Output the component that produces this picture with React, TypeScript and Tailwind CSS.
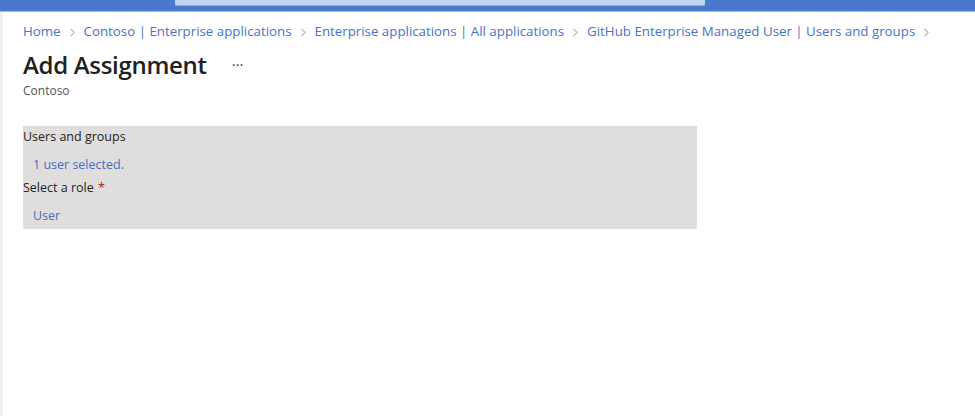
import { ChevronRight } from "lucide-react";

const crumbs = [
  "Home",
  "Contoso | Enterprise applications",
  "Enterprise applications | All applications",
  "GitHub Enterprise Managed User | Users and groups",
];

export default function App() {
  return (
    <div
      className="relative flex flex-col h-[416px] w-[975px] overflow-hidden bg-white"
      style={{ fontFamily: '"Open Sans", "Noto Sans", sans-serif' }}
    >
      {/* top bar */}
      <div className="h-[12px] bg-[#4a78cc] border-b border-[#9db7e6] flex shrink-0">
        <div className="ml-[175px] w-[530px] h-[6px] bg-[#c0d7f1] border-b border-[#8caadf] rounded-b-[2px]" />
      </div>

      <div className="flex flex-1">
        <div className="w-[3px] bg-[#f0f0f0] shrink-0" />

        <div className="flex-1 pl-[20px] pt-[10px]">
          {/* breadcrumb */}
          <nav className="flex items-center h-[20px] text-[13.3px] text-[#4a72c8] whitespace-nowrap">
            {crumbs.map((c) => (
              <div key={c} className="flex items-center">
                <span>{c}</span>
                <ChevronRight size={13} strokeWidth={1.6} className="mx-[5px] text-[#757575]" />
              </div>
            ))}
          </nav>

          {/* title */}
          <div className="flex items-center h-[30px] mt-[8px]">
            <h1 className="text-[24px] font-semibold text-[#212121] tracking-[-0.3px]">Add Assignment</h1>
            <span className="ml-[25px] text-[15px] text-[#444] mb-[2px]">···</span>
          </div>
          <div className="text-[12px] text-[#555] mt-[3px] leading-[16px]">Contoso</div>

          {/* form panel */}
          <div className="mt-[27px] w-[674px] h-[103px] pt-[1px] bg-[#dfdedd] text-[12.5px] leading-[20px]">
            <div className="text-[#242424]">Users and groups</div>
            <div className="mt-[8px] pl-[10px] text-[#4a6cc0]">1 user selected.</div>
            <div className="mt-[3px] text-[#242424]">
              Select a role <span className="ml-[1px] text-[#a4262c]">*</span>
            </div>
            <div className="mt-[8px] pl-[10px] text-[#4a6cc0]">User</div>
          </div>
        </div>
      </div>
    </div>
  );
}
